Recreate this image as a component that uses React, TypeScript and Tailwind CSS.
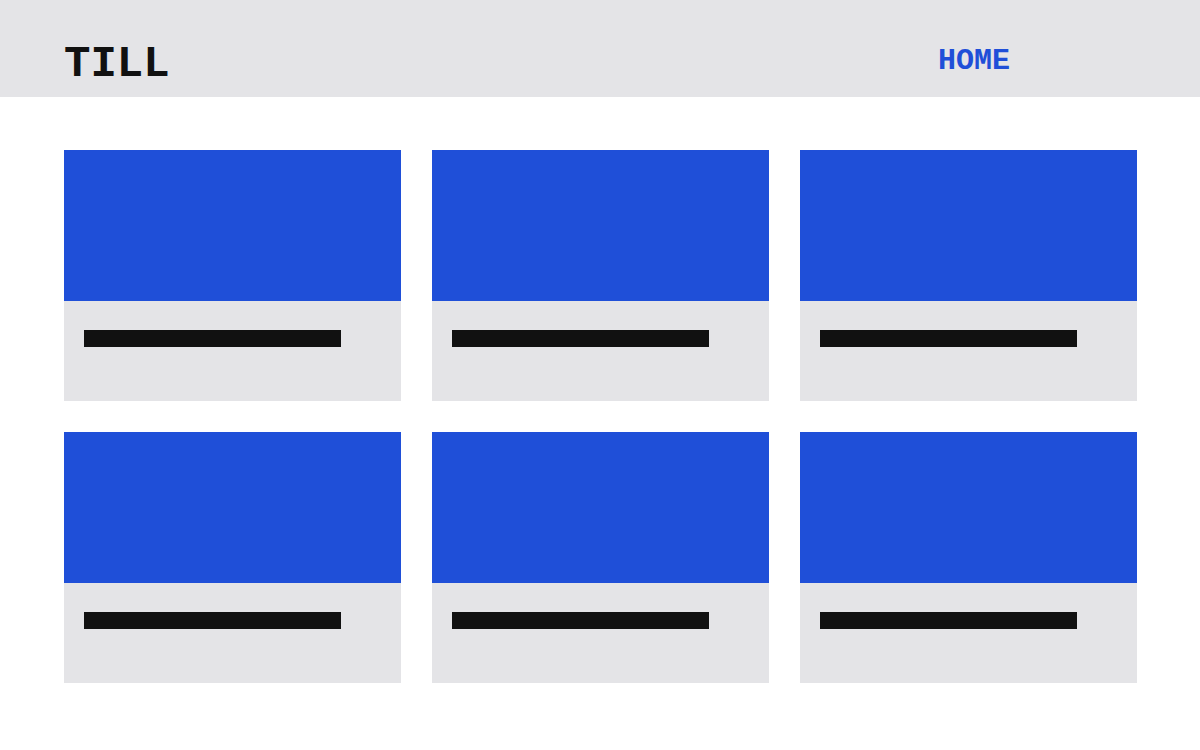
export default function App() {
  const cards = [1, 2, 3, 4, 5, 6];
  return (
    <div className="min-h-screen bg-white" style={{ fontFamily: '"Liberation Mono", monospace' }}>
      <header className="h-[97px] bg-[#e4e4e7] flex items-start justify-between pl-16 pr-[190px]">
        <h1 className="mt-[42px] text-[44px] leading-none font-bold text-[#111111]">TILL</h1>
        <nav className="mt-[46px]">
          <a href="#" className="text-[30px] leading-none font-bold text-[#1f4fd8]">HOME</a>
        </nav>
      </header>
      <main className="px-16 pt-[53px] grid grid-cols-3 gap-[31px] w-[1201px]">
        {cards.map((c) => (
          <div key={c} className="h-[251px] flex flex-col">
            <div className="h-[151px] bg-[#1f4fd8]" />
            <div className="flex-1 bg-[#e4e4e7] pl-5 pt-[29px]">
              <div className="w-[257px] h-[17px] bg-[#111111]" />
            </div>
          </div>
        ))}
      </main>
    </div>
  );
}
